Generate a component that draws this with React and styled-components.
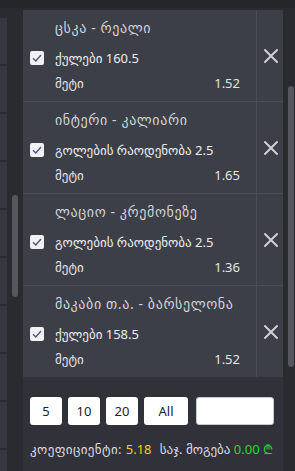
import styled, { createGlobalStyle } from "styled-components";

const Global = createGlobalStyle`
  html, body {
    margin: 0;
    padding: 0;
    background: #2a2b30;
  }
  * {
    box-sizing: border-box;
  }
`;

const Page = styled.div`
  width: 295px;
  height: 471px;
  overflow: hidden;
  background: #2a2b30;
  font-family: "Noto Sans", "DejaVu Sans", sans-serif;
  font-size: 13px;
  color: #d9d9de;
  display: flex;
  flex-direction: column;
`;

const TopBar = styled.div`
  height: 8px;
  background: #25262a;
  flex-shrink: 0;
`;

const Body = styled.div`
  flex: 1;
  display: flex;
`;

const Sliver = styled.div`
  width: 7px;
  padding-top: 10px;
  display: flex;
  flex-direction: column;
  gap: 2px;
`;

const SliverItem = styled.div`
  height: 46px;
  background: #363841;
`;

const Gutter = styled.div`
  width: ${(p) => p.w}px;
  padding-top: ${(p) => p.thumbTop}px;
  padding-left: ${(p) => p.thumbLeft}px;
  background: #2a2b30;
`;

const Thumb = styled.div`
  width: ${(p) => p.w}px;
  height: ${(p) => p.h}px;
  border-radius: 3px;
  background: #56575e;
`;

const Panel = styled.div`
  width: 260px;
  padding-top: 2px;
  display: flex;
  flex-direction: column;
`;

const List = styled.div`
  background: #3d3f48;
`;

const Row = styled.div`
  height: 92px;
  display: flex;
  border-bottom: 1px solid #4b4d56;
  &:last-child {
    border-bottom: none;
    height: 91px;
  }
`;

const Main = styled.div`
  flex: 1;
  min-width: 0;
  padding: 8px 16px 8px 7px;
  display: grid;
  grid-template-columns: 14px minmax(0, 1fr);
  column-gap: 11px;
  align-content: start;
`;

const Title = styled.div`
  grid-column: 2;
  line-height: 20px;
  font-size: 14px;
  letter-spacing: 0.6px;
  white-space: nowrap;
  color: #d2d2d7;
`;

const Check = styled.div`
  grid-column: 1;
  align-self: center;
  margin-top: 10px;
  width: 14px;
  height: 14px;
  border-radius: 2px;
  background: #f1f1f4;
  display: flex;
  align-items: center;
  justify-content: center;
`;

const Selection = styled.div`
  grid-column: 2;
  margin-top: 10px;
  line-height: 20px;
  white-space: nowrap;
  color: #ececf0;
`;

const OddsLine = styled.div`
  grid-column: 2;
  margin-top: 5px;
  line-height: 20px;
  display: flex;
  justify-content: space-between;
  color: #e4e4e8;
`;

const Close = styled.div`
  width: 27px;
  flex-shrink: 0;
  border-left: 1px solid #4b4d56;
  display: flex;
  align-items: center;
  justify-content: center;
  padding-left: 1px;
`;

const Footer = styled.div`
  flex: 1;
  background: #303139;
  padding: 20px 9px 0 7px;
`;

const Stakes = styled.div`
  display: flex;
  gap: 6px;
`;

const StakeBtn = styled.div`
  width: ${(p) => p.w}px;
  height: 28px;
  background: #ffffff;
  border-radius: 3px;
  color: #222;
  display: flex;
  align-items: center;
  justify-content: center;
  font-size: 13px;
`;

const StakeInput = styled.div`
  flex: 1;
  margin-left: 2px;
  height: 28px;
  background: #ffffff;
  border: 1px solid #c9c9cf;
  border-radius: 3px;
`;

const Summary = styled.div`
  margin-top: 14px;
  line-height: 20px;
  display: flex;
  justify-content: space-between;
  white-space: nowrap;
  color: #dcdce2;
  padding-right: 1px;
`;

const Label = styled.span`
  letter-spacing: ${(p) => p.ls || 0}px;
`;

const Val = styled.span`
  color: ${(p) => p.c};
  letter-spacing: 0;
`;

const bets = [
  { title: "ცსკა - რეალი", pick: "ქულები 160.5", odds: "1.52" },
  { title: "ინტერი - კალიარი", pick: "გოლების რაოდენობა 2.5", odds: "1.65" },
  { title: "ლაციო - კრემონეზე", pick: "გოლების რაოდენობა 2.5", odds: "1.36" },
  { title: "მაკაბი თ.ა. - ბარსელონა", pick: "ქულები 158.5", odds: "1.52" },
];

const CheckIcon = () => (
  <svg width="10" height="8" viewBox="0 0 10 8">
    <path d="M1 4.2 L3.8 7 L9 1" fill="none" stroke="#4d5f80" strokeWidth="1.5" />
  </svg>
);

const XIcon = () => (
  <svg width="14" height="14" viewBox="0 0 14 14">
    <path d="M1 1 L13 13 M13 1 L1 13" stroke="#d2d2d8" strokeWidth="1.9" strokeLinecap="round" />
  </svg>
);

function App() {
  return (
    <Page>
      <Global />
      <TopBar />
      <Body>
        <Sliver>
          {Array.from({ length: 10 }).map((_, i) => (
            <SliverItem key={i} />
          ))}
        </Sliver>
        <Gutter w={16} thumbTop={187} thumbLeft={5}>
          <Thumb w={6} h={102} />
        </Gutter>
        <Panel>
          <List>
            {bets.map((b) => (
              <Row key={b.title}>
                <Main>
                  <Title>{b.title}</Title>
                  <Check>
                    <CheckIcon />
                  </Check>
                  <Selection>{b.pick}</Selection>
                  <OddsLine>
                    <span>მეტი</span>
                    <span>{b.odds}</span>
                  </OddsLine>
                </Main>
                <Close>
                  <XIcon />
                </Close>
              </Row>
            ))}
          </List>
          <Footer>
            <Stakes>
              <StakeBtn w={32}>5</StakeBtn>
              <StakeBtn w={32}>10</StakeBtn>
              <StakeBtn w={32}>20</StakeBtn>
              <StakeBtn w={44}>All</StakeBtn>
              <StakeInput />
            </Stakes>
            <Summary>
              <Label ls={0.4}>
                კოეფიციენტი: <Val c="#f2d21b">5.18</Val>
              </Label>
              <Label>
                საჯ. მოგება <Val c="#27d83a">0.00 ₾</Val>
              </Label>
            </Summary>
          </Footer>
        </Panel>
        <Gutter w={12} thumbTop={78} thumbLeft={5}>
          <Thumb w={6} h={281} />
        </Gutter>
      </Body>
    </Page>
  );
}

export default App;
